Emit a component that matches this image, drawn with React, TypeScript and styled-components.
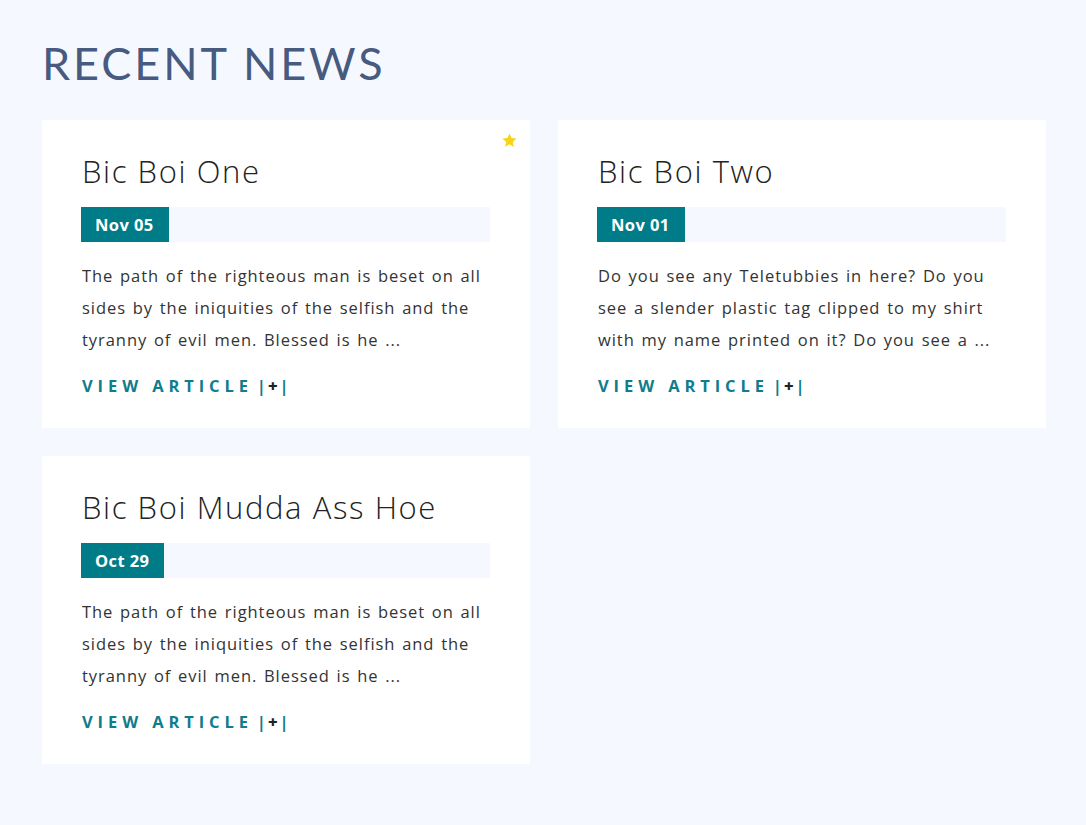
import React from "react";
import styled, { createGlobalStyle } from "styled-components";

const GlobalStyle = createGlobalStyle`
  body {
    margin: 0;
    background: #f5f9ff;
    font-family: "Open Sans", "Liberation Sans", sans-serif;
  }
`;

type Article = {
  title: string;
  date: string;
  excerpt: string;
  starred?: boolean;
};

const articles: Article[] = [
  {
    title: "Bic Boi One",
    date: "Nov 05",
    excerpt:
      "The path of the righteous man is beset on all sides by the iniquities of the selfish and the tyranny of evil men. Blessed is he ...",
    starred: true,
  },
  {
    title: "Bic Boi Two",
    date: "Nov 01",
    excerpt:
      "Do you see any Teletubbies in here? Do you see a slender plastic tag clipped to my shirt with my name printed on it? Do you see a ...",
  },
  {
    title: "Bic Boi Mudda Ass Hoe",
    date: "Oct 29",
    excerpt:
      "The path of the righteous man is beset on all sides by the iniquities of the selfish and the tyranny of evil men. Blessed is he ...",
  },
];

const Page = styled.div`
  padding: 36px 42px 60px;
  min-height: 825px;
  box-sizing: border-box;
`;

const Heading = styled.h1`
  margin: 0 0 30px;
  font-family: "Lato", "Open Sans", sans-serif;
  font-weight: 400;
  font-size: 45px;
  line-height: 54px;
  letter-spacing: 2.9px;
  color: #475a80;
`;

const Grid = styled.div`
  display: grid;
  grid-template-columns: 488px 488px;
  gap: 28px;
`;

const Card = styled.article`
  position: relative;
  background: #fff;
  padding: 30px 40px 30px 39px;
  height: 308px;
  box-sizing: border-box;
`;

const Star = styled.svg`
  position: absolute;
  top: 12px;
  right: 12px;
  width: 17px;
  height: 17px;
`;

const Title = styled.h2`
  margin: 0 0 15px 1px;
  font-weight: 300;
  font-size: 31px;
  line-height: 42px;
  letter-spacing: 1.6px;
  color: #222;
`;

const DateBar = styled.div`
  display: flex;
  height: 35px;
  background: #f5f9ff;
`;

const DateBadge = styled.span`
  display: flex;
  align-items: center;
  padding: 0 15px 0 14px;
  background: #007c89;
  color: #fff;
  font-weight: 700;
  font-size: 16.5px;
  letter-spacing: 0.4px;
`;

const Excerpt = styled.p`
  margin: 18px 0 18px 1px;
  font-size: 16.5px;
  line-height: 32px;
  letter-spacing: 0.95px;
  word-spacing: 1.5px;
  color: #333;
`;

const ViewLink = styled.a`
  display: inline-flex;
  align-items: center;
  margin-left: 1px;
  font-weight: 700;
  font-size: 16.5px;
  letter-spacing: 4.9px;
  color: #0f7d8c;
  text-decoration: none;
`;

const Plus = styled.span`
  display: inline-flex;
  align-items: center;
  gap: 2px;
  margin-left: 4px;
  letter-spacing: 0;
  font-weight: 700;
  color: #0f7d8c;
  b {
    color: #222;
  }
`;

const NewsCard = ({ article }: { article: Article }) => (
  <Card>
    {article.starred && (
      <Star viewBox="0 0 24 24">
        <path
          fill="#f7d417"
          d="M12 2l2.9 6.6 7.1.7-5.4 4.8 1.6 7-6.2-3.7-6.2 3.7 1.6-7L2 9.3l7.1-.7z"
        />
      </Star>
    )}
    <Title>{article.title}</Title>
    <DateBar>
      <DateBadge>{article.date}</DateBadge>
    </DateBar>
    <Excerpt>{article.excerpt}</Excerpt>
    <ViewLink href="#">
      VIEW ARTICLE
      <Plus>
        |<b>+</b>|
      </Plus>
    </ViewLink>
  </Card>
);

export default function App() {
  return (
    <Page>
      <GlobalStyle />
      <Heading>RECENT NEWS</Heading>
      <Grid>
        {articles.map((a) => (
          <NewsCard key={a.title} article={a} />
        ))}
      </Grid>
    </Page>
  );
}
